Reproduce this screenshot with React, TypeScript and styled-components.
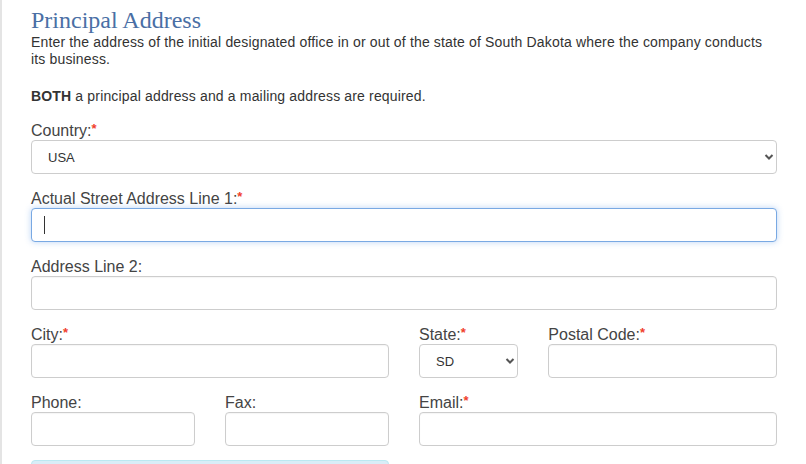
import React from "react";
import styled, { createGlobalStyle } from "styled-components";

const GlobalStyle = createGlobalStyle`
  html, body { margin: 0; padding: 0; background: #fff; overflow: hidden; }
  body { font-family: "Liberation Sans", Arial, Helvetica, sans-serif; color: #333; }
  * { box-sizing: border-box; }
`;

const Page = styled.div`
  border-left: 2px solid #e4e4e4;
  padding: 7px 29px 0 29px;
  height: 464px;
  overflow: hidden;
`;

const Title = styled.h2`
  margin: 0;
  font-family: "Liberation Serif", "Times New Roman", serif;
  font-weight: normal;
  font-size: 24px;
  line-height: 27px;
  color: #4a6fa5;
`;

const Intro = styled.p<{ $gap?: number }>`
  margin: 0 0 ${(p) => p.$gap ?? 0}px 0;
  font-size: 14px;
  letter-spacing: 0.16px;
  line-height: 17px;
  color: #333;
  padding-right: 6px;
`;

const Form = styled.div`
  display: flex;
  flex-direction: column;
  gap: 16px;
`;

const Row = styled.div`
  display: grid;
  grid-template-columns: repeat(12, 1fr);
  column-gap: 30px;
`;

const Field = styled.div<{ $span: number }>`
  grid-column: span ${(p) => p.$span};
  display: flex;
  flex-direction: column;
  min-width: 0;
`;

const Label = styled.label`
  font-size: 16px;
  line-height: 18px;
  color: #444;
  white-space: nowrap;
`;

const Req = styled.span`
  color: #f0402c;
  font-size: 13px;
  font-weight: bold;
  line-height: 1;
  vertical-align: text-top;
`;

const Input = styled.input<{ $focused?: boolean }>`
  height: 34px;
  width: 100%;
  padding: 6px 12px;
  font-family: inherit;
  font-size: 14px;
  color: #333;
  background: #fff;
  border: 1px solid ${(p) => (p.$focused ? "#79a9e3" : "#cdcdcd")};
  border-radius: 4px;
  outline: none;
  box-shadow: ${(p) =>
    p.$focused
      ? "0 0 6px rgba(102, 160, 233, 0.45)"
      : "inset 0 1px 1px rgba(0,0,0,0.04)"};
`;

const InputWrap = styled.div`
  position: relative;
`;

const Caret = styled.span`
  position: absolute;
  left: 13px;
  top: 8px;
  width: 1px;
  height: 18px;
  background: #333;
`;

const SelectWrap = styled.div`
  position: relative;
  width: 100%;
`;

const Select = styled.select`
  appearance: none;
  -webkit-appearance: none;
  width: 100%;
  height: 34px;
  padding: 0 26px 0 16px;
  font-family: inherit;
  font-size: 13px;
  color: #333;
  background: #fff;
  border: 1px solid #cdcdcd;
  border-radius: 4px;
  outline: none;
`;

const Chevron = styled.svg`
  position: absolute;
  right: 3px;
  top: 13px;
  width: 10px;
  height: 8px;
  pointer-events: none;
`;

const Alert = styled.div`
  grid-column: span 6;
  height: 40px;
  margin-top: -2px;
  background: #d9edf7;
  border: 1px solid #bce8f1;
  border-radius: 4px;
`;

const ChevronIcon = () => (
  <Chevron viewBox="0 0 10 8">
    <polyline points="1.5,2 5,5.5 8.5,2" fill="none" stroke="#555" strokeWidth="2" />
  </Chevron>
);

const Required = () => <Req>*</Req>;

export default function App() {
  return (
    <>
      <GlobalStyle />
      <Page>
        <Title>Principal Address</Title>
        <Intro $gap={20}>
          Enter the address of the initial designated office in or out of the state of South Dakota
          where the company conducts its business.
        </Intro>
        <Intro $gap={17}>
          <b>BOTH</b> a principal address and a mailing address are required.
        </Intro>
        <Form>
          <Row>
            <Field $span={12}>
              <Label>
                Country:<Required />
              </Label>
              <SelectWrap>
                <Select defaultValue="USA">
                  <option>USA</option>
                </Select>
                <ChevronIcon />
              </SelectWrap>
            </Field>
          </Row>
          <Row>
            <Field $span={12}>
              <Label>
                Actual Street Address Line 1:<Required />
              </Label>
              <InputWrap>
                <Input $focused />
                <Caret />
              </InputWrap>
            </Field>
          </Row>
          <Row>
            <Field $span={12}>
              <Label>Address Line 2:</Label>
              <Input />
            </Field>
          </Row>
          <Row>
            <Field $span={6}>
              <Label>
                City:<Required />
              </Label>
              <Input />
            </Field>
            <Field $span={2}>
              <Label>
                State:<Required />
              </Label>
              <SelectWrap>
                <Select defaultValue="SD">
                  <option>SD</option>
                </Select>
                <ChevronIcon />
              </SelectWrap>
            </Field>
            <Field $span={4}>
              <Label>
                Postal Code:<Required />
              </Label>
              <Input />
            </Field>
          </Row>
          <Row>
            <Field $span={3}>
              <Label>Phone:</Label>
              <Input />
            </Field>
            <Field $span={3}>
              <Label>Fax:</Label>
              <Input />
            </Field>
            <Field $span={6}>
              <Label>
                Email:<Required />
              </Label>
              <Input />
            </Field>
          </Row>
          <Row>
            <Alert />
          </Row>
        </Form>
      </Page>
    </>
  );
}
